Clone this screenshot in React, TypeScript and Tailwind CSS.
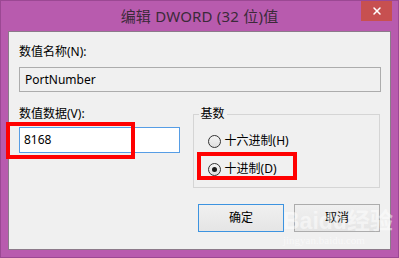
import { X } from "lucide-react";

const ui = "font-['Segoe_UI','Noto_Sans','Noto_Sans_CJK_SC',sans-serif]";

function Radio({ checked, label }: { checked?: boolean; label: string }) {
  return (
    <label className="flex items-center h-[16px] gap-[4px]">
      <span className="w-[13px] h-[13px] rounded-full border border-[#333] bg-gradient-to-b from-[#f4f4f4] to-[#dedede] flex items-center justify-center">
        {checked && <span className="w-[5px] h-[5px] rounded-full bg-[#1a1a1a]" />}
      </span>
      <span>{label}</span>
    </label>
  );
}

export default function App() {
  return (
    <div className={`relative w-[399px] h-[258px] bg-[#b85bae] border border-[#9b4893] overflow-hidden text-[12px] leading-[16px] text-black ${ui}`}>
      {/* title bar */}
      <div className="relative h-[30px] flex items-center justify-center">
        <span className="text-[15px] text-[#3b2a39] tracking-[0.2px]">编辑 DWORD (32 位)值</span>
        <button className="absolute right-[6px] top-[-1px] w-[31px] h-[21px] bg-[#c75050] flex items-center justify-center">
          <X className="w-[12px] h-[12px] text-white" strokeWidth={3} />
        </button>
      </div>

      {/* client area */}
      <div className="mx-[7px] h-[219px] bg-[#f0f0f0] border border-[#8c7a8a] flex flex-col pt-[12px] px-[10px]">
        <div>数值名称(N):</div>
        <div className="mt-[7px] h-[25px] w-[362px] border border-[#acacac] bg-[#f0f0f0] flex items-center pl-[5px]">
          PortNumber
        </div>

        <div className="mt-[14px] flex">
          <div className="flex flex-col w-[161px]">
            <div>数值数据(V):</div>
            <div className="mt-[5px] h-[26px] border border-[#569de5] bg-white flex items-center pl-[4px]">
              8168
            </div>
          </div>

          <fieldset className="ml-[13px] w-[188px] h-[82px] border border-[#d5d5d5] rounded-none">
            <legend className="ml-[5px] px-[2px]">基数</legend>
            <div className="flex flex-col gap-[12px] pl-[14px] pt-[11px]">
              <Radio label="十六进制(H)" />
              <Radio checked label="十进制(D)" />
            </div>
          </fieldset>
        </div>

        <div className="mt-[16px] flex justify-end gap-[10px]">
          <button className="w-[86px] h-[28px] border border-[#3c93e0] bg-gradient-to-b from-[#f0f0f0] to-[#e5e5e5]">
            确定
          </button>
          <button className="w-[86px] h-[28px] border border-[#acacac] bg-gradient-to-b from-[#f0f0f0] to-[#e5e5e5]">
            取消
          </button>
        </div>
      </div>

      {/* red highlight marks */}
      <div className="absolute left-[5px] top-[121px] w-[129px] h-[37px] border-[4px] border-[#ff0000]" />
      <div className="absolute left-[196px] top-[151px] w-[100px] h-[28px] border-[4px] border-[#ff0000]" />

      {/* watermark */}
      <div className="absolute left-[282px] top-[207px] text-white/50 pointer-events-none">
        <div className="text-[23px] leading-[26px] font-bold font-['Liberation_Sans','Noto_Sans_CJK_SC',sans-serif]">Baidu经验</div>
        <div className="text-[11px] leading-[12px] font-['Liberation_Serif',serif]">jingyan.baidu.com</div>
      </div>
    </div>
  );
}
